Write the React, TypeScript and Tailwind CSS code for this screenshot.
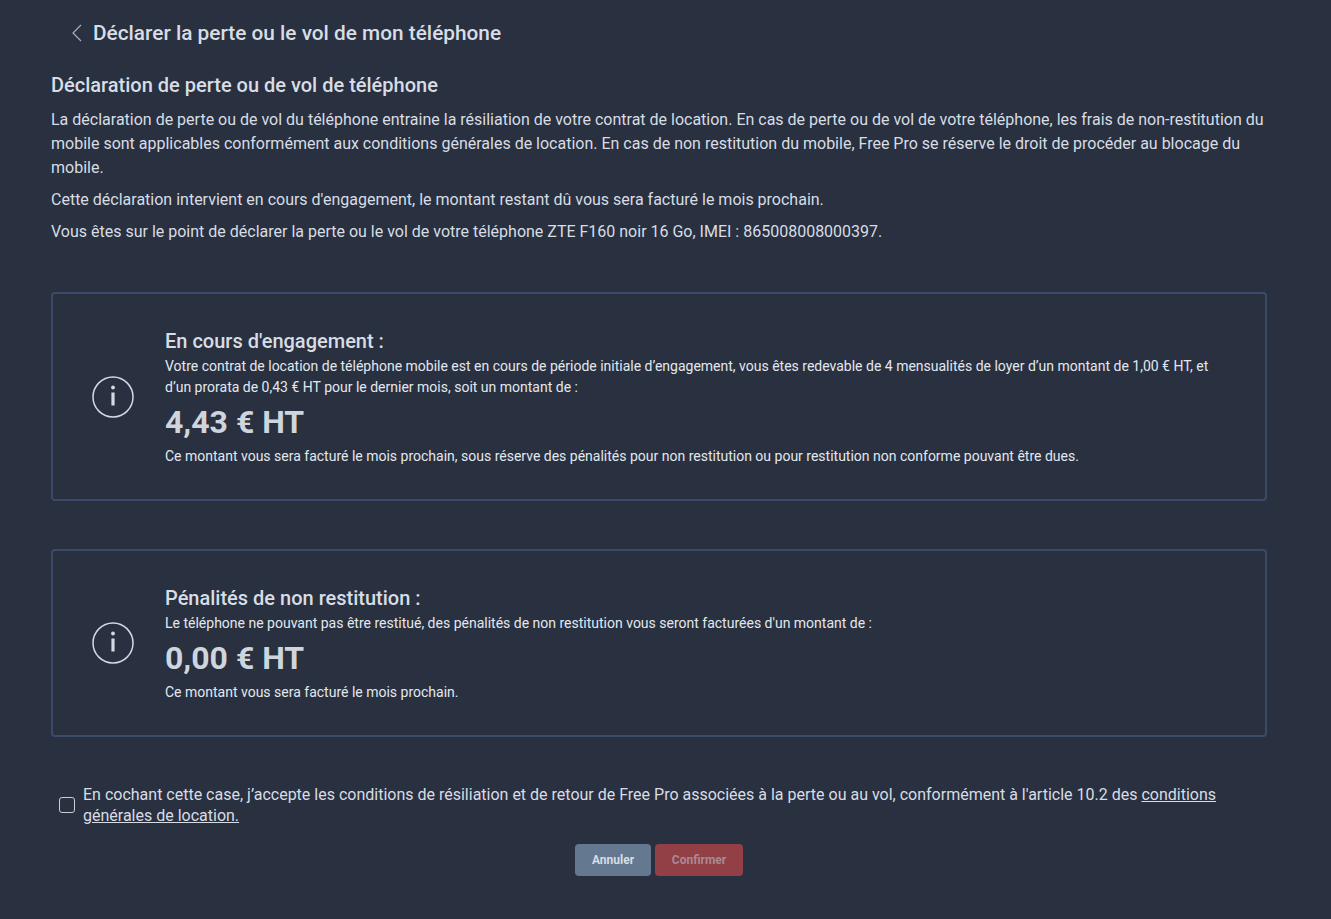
import { ReactNode } from 'react'

function InfoIcon() {
  return (
    <svg width="42" height="42" viewBox="0 0 42 42" fill="none" className="shrink-0">
      <circle cx="21" cy="21" r="20" stroke="#d5dae2" strokeWidth="1.5" />
      <rect x="19.4" y="16.5" width="3.2" height="13" fill="#d5dae2" />
      <circle cx="21" cy="11.5" r="1.9" fill="#d5dae2" />
    </svg>
  )
}

function InfoCard({
  title,
  amount,
  footer,
  className,
  children,
}: {
  title: string
  amount: string
  footer: string
  className: string
  children: ReactNode
}) {
  return (
    <div className={`flex items-center rounded border-2 border-[#3c4a69] pl-[39px] pr-[40px] ${className}`}>
      <InfoIcon />
      <div className="ml-[31px] flex-1 pt-[1px]">
        <div className="text-[20px] leading-[26px] font-medium text-[#d8dde5]">{title}</div>
        <div className="mt-[2px] text-[14px] leading-[21px] text-[#e2e8f0]">{children}</div>
        <div className="mt-[4px] mb-[4px] text-[32px] leading-[40px] font-bold text-[#cfd5dd]">{amount}</div>
        <div className="text-[14px] leading-[21px] text-[#e2e8f0]">{footer}</div>
      </div>
    </div>
  )
}

export default function App() {
  return (
    <div className="min-h-[919px] bg-[#29303f] pl-[51px] pr-[64px] font-['Roboto',sans-serif] text-[#d8dde5]">
      <div className="flex h-[66px] items-center pl-[20px]">
        <svg width="12" height="18" viewBox="0 0 12 18" fill="none" className="mr-[10px]">
          <path d="M10 1 L2 9 L10 17" stroke="#a7adb8" strokeWidth="1.2" />
        </svg>
        <h1 className="text-[20.8px] leading-[28px] font-medium text-[#d8dde5]">Déclarer la perte ou le vol de mon téléphone</h1>
      </div>

      <h2 className="mt-[5px] text-[20px] leading-[28px] font-medium text-[#d8dde5]">Déclaration de perte ou de vol de téléphone</h2>
      <p className="mt-[9px] text-[16px] leading-[24px]">
        La déclaration de perte ou de vol du téléphone entraine la résiliation de votre contrat de location. En cas de perte ou de vol de votre téléphone, les frais de non-restitution du mobile sont applicables conformément aux conditions générales de location. En cas de non restitution du mobile, Free Pro se réserve le droit de procéder au blocage du mobile.
      </p>
      <p className="mt-[8px] text-[16px] leading-[24px]">Cette déclaration intervient en cours d'engagement, le montant restant dû vous sera facturé le mois prochain.</p>
      <p className="mt-[8px] text-[16px] leading-[24px]">Vous êtes sur le point de déclarer la perte ou le vol de votre téléphone ZTE F160 noir 16 Go, IMEI : 865008008000397.</p>

      <InfoCard
        className="mt-[48px] h-[209px]"
        title="En cours d'engagement :"
        amount="4,43 € HT"
        footer="Ce montant vous sera facturé le mois prochain, sous réserve des pénalités pour non restitution ou pour restitution non conforme pouvant être dues."
      >
        Votre contrat de location de téléphone mobile est en cours de période initiale d’engagement, vous êtes redevable de 4 mensualités de loyer d’un montant de 1,00 € HT, et d’un prorata de 0,43 € HT pour le dernier mois, soit un montant de :
      </InfoCard>

      <InfoCard
        className="mt-[48px] h-[188px]"
        title="Pénalités de non restitution :"
        amount="0,00 € HT"
        footer="Ce montant vous sera facturé le mois prochain."
      >
        Le téléphone ne pouvant pas être restitué, des pénalités de non restitution vous seront facturées d'un montant de :
      </InfoCard>

      <label className="mt-[47px] flex items-center pl-[8px] text-[16px] leading-[21px]">
        <span className="mr-[8px] h-[16px] w-[16px] shrink-0 rounded-[3px] border border-[#c9ced6]" />
        <span>
          En cochant cette case, j’accepte les conditions de résiliation et de retour de Free Pro associées à la perte ou au vol, conformément à l'article 10.2 des <span className="underline">conditions générales de location.</span>
        </span>
      </label>

      <div className="mt-[18px] flex justify-center gap-[4px]">
        <button className="h-[32px] w-[76px] rounded bg-[#64788f] text-[12px] font-bold text-[#d8dde5]">Annuler</button>
        <button className="h-[32px] w-[88px] rounded bg-[#933f46] text-[12px] font-bold text-[#a98a90]">Confirmer</button>
      </div>
    </div>
  )
}
